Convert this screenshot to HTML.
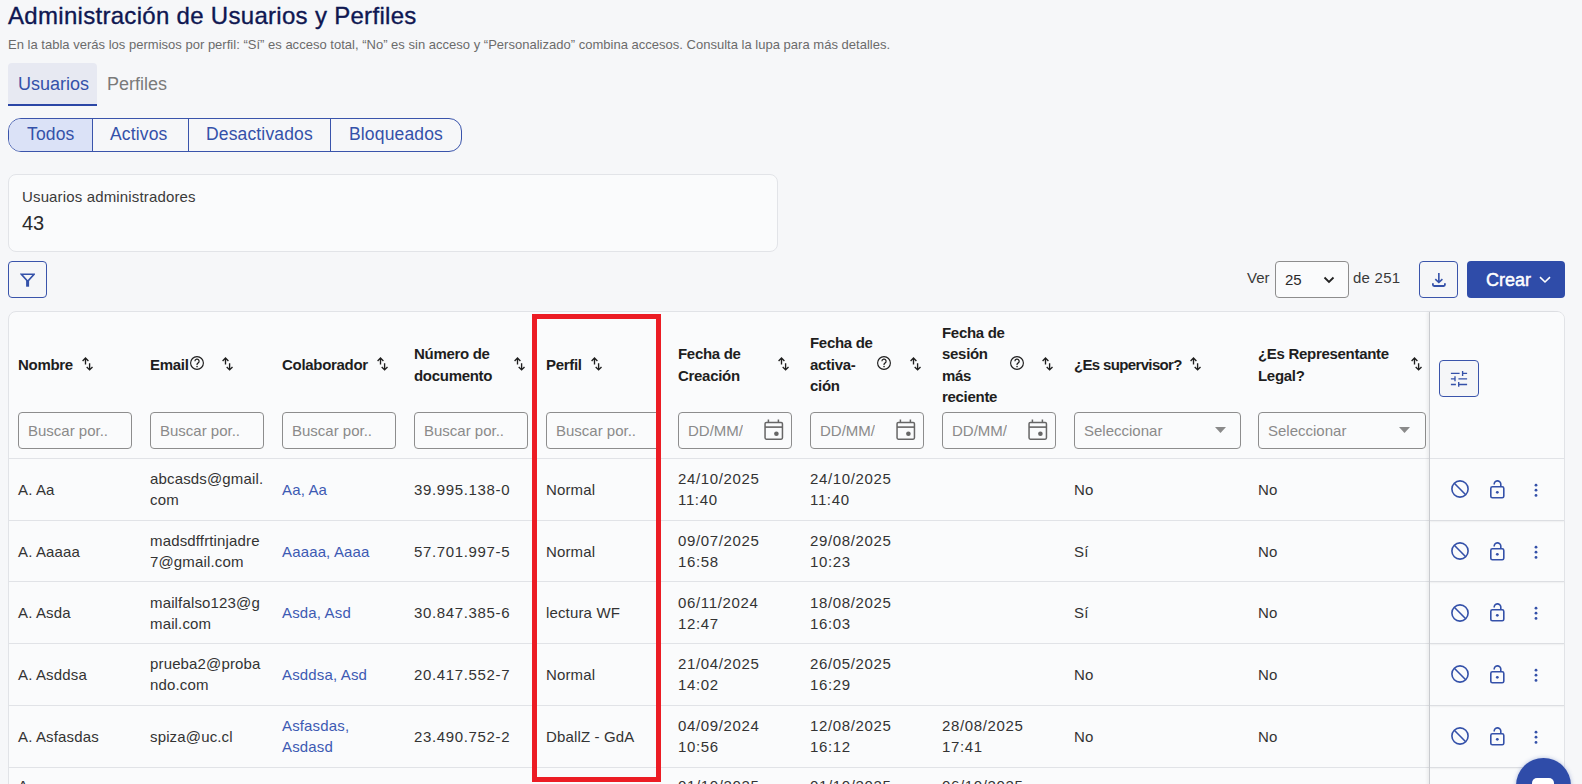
<!DOCTYPE html><html><head><meta charset="utf-8"><style>
*{box-sizing:border-box;margin:0;padding:0}
html,body{width:1582px;height:784px;overflow:hidden;background:#f6f7f9;font-family:"Liberation Sans",sans-serif;color:#333}
.a{position:absolute;white-space:nowrap}
.hl{position:absolute;font-weight:700;font-size:15px;line-height:21.5px;color:#1e1e1e;letter-spacing:-0.3px;white-space:nowrap}
.cell{position:absolute;font-size:15px;line-height:21px;color:#333;white-space:nowrap;letter-spacing:0.15px}
.dg{letter-spacing:0.65px}
.inp{position:absolute;top:412px;height:37px;border:1px solid #8d8d8d;border-radius:4px;background:#fafbfc;font-size:15px;color:#8a8a8a;line-height:35px;padding-left:9px;overflow:hidden;white-space:nowrap}
.link{color:#3d5ab3}
</style></head><body>
<div class="a" style="left:8px;top:1px;font-size:24px;line-height:30px;color:#0f1752;letter-spacing:0.3px;-webkit-text-stroke:0.35px #0f1752">Administración de Usuarios y Perfiles</div>
<div class="a" style="left:8px;top:37px;font-size:13px;line-height:16px;color:#6b6b6b;letter-spacing:0.013px">En la tabla verás los permisos por perfil: “Sí” es acceso total, “No” es sin acceso y “Personalizado” combina accesos. Consulta la lupa para más detalles.</div>
<div class="a" style="left:8px;top:63px;width:89px;height:43px;background:#e7e9f2;border-radius:4px 4px 0 0;border-bottom:2px solid #2b46a6"></div>
<div class="a" style="left:18px;top:73px;font-size:18px;line-height:22px;color:#3451a9">Usuarios</div>
<div class="a" style="left:107px;top:73px;font-size:18px;line-height:22px;color:#7a7a7a">Perfiles</div>
<div class="a" style="left:8px;top:118px;width:454px;height:34px;border:1px solid #3a54ab;border-radius:13px;overflow:hidden;background:transparent"><div style="position:absolute;left:0;top:0;width:84px;height:32px;background:#dbe2f7;border-right:1px solid #3a54ab"></div><div style="position:absolute;left:179px;top:0;width:1px;height:32px;background:#3a54ab"></div><div style="position:absolute;left:321px;top:0;width:1px;height:32px;background:#3a54ab"></div></div>
<div class="a" style="left:27px;top:124px;font-size:17.5px;line-height:21px;color:#3451a9;letter-spacing:0.15px">Todos</div>
<div class="a" style="left:110px;top:124px;font-size:17.5px;line-height:21px;color:#3451a9;letter-spacing:0.15px">Activos</div>
<div class="a" style="left:206px;top:124px;font-size:17.5px;line-height:21px;color:#3451a9;letter-spacing:0.15px">Desactivados</div>
<div class="a" style="left:349px;top:124px;font-size:17.5px;line-height:21px;color:#3451a9;letter-spacing:0.15px">Bloqueados</div>
<div class="a" style="left:8px;top:174px;width:770px;height:78px;border:1px solid #e2e4e8;border-radius:8px;background:#fafbfc"></div>
<div class="a" style="left:22px;top:187px;font-size:15px;line-height:19px;color:#3a3a3a;letter-spacing:0.15px">Usuarios administradores</div>
<div class="a" style="left:22px;top:211px;font-size:20px;line-height:24px;color:#2a2a2a">43</div>
<div class="a" style="left:8px;top:261px;width:39px;height:37px;border:1px solid #3a54ab;border-radius:4px;background:#f5f6f8"></div>
<svg class="a" style="left:20px;top:273px" width="15" height="15" viewBox="0 0 15 15"><path d="M1.4 1.3H14L7.7 8.2Z" fill="none" stroke="#3451a9" stroke-width="1.6" stroke-linejoin="miter"/><rect x="6.1" y="7.2" width="3" height="6.5" fill="#3451a9"/></svg>
<div class="a" style="left:1247px;top:267.5px;font-size:15px;line-height:19px;color:#3a3a3a">Ver</div>
<div class="a" style="left:1275px;top:261px;width:74px;height:37px;border:1px solid #8d8d8d;border-radius:4px;background:#fafbfc"></div>
<div class="a" style="left:1285px;top:269.5px;font-size:15px;line-height:19px;color:#2a2a2a" class="dg">25</div>
<svg class="a" style="left:1323px;top:276px" width="12" height="8" viewBox="0 0 12 8"><path d="M1.5 1.5L6 6L10.5 1.5" fill="none" stroke="#222" stroke-width="1.8"/></svg>
<div class="a" style="left:1353px;top:267.5px;font-size:15px;line-height:19px;color:#3a3a3a;letter-spacing:0.25px">de 251</div>
<div class="a" style="left:1419px;top:261px;width:39px;height:37px;border:1px solid #3a54ab;border-radius:4px;background:#f5f6f8"></div>
<svg class="a" style="left:1431px;top:272px" width="15" height="15" viewBox="0 0 15 15"><path d="M7.85 1V10.2M4.3 7.1L7.85 10.5L11.4 7.1" fill="none" stroke="#3451a9" stroke-width="1.6"/><path d="M1.9 11.2V12.8Q1.9 14 3.1 14H12.7Q13.9 14 13.9 12.8V11.2" fill="none" stroke="#3451a9" stroke-width="1.8"/></svg>
<div class="a" style="left:1467px;top:261px;width:98px;height:37px;border-radius:4px;background:#2f4ca9"></div>
<div class="a" style="left:1486px;top:270px;font-size:18px;line-height:21px;color:#fff;font-weight:400;-webkit-text-stroke:0.45px #fff;letter-spacing:0px">Crear</div>
<svg class="a" style="left:1539px;top:276px" width="12" height="8" viewBox="0 0 12 8"><path d="M1 1.2L6 6L11 1.2" fill="none" stroke="#fff" stroke-width="1.6"/></svg>
<div class="a" style="left:8px;top:311px;width:1557px;height:500px;border:1px solid #e1e3e7;border-radius:8px;background:#fafbfc"></div>
<div class="hl" style="left:18px;top:353.75px">Nombre</div>
<div class="hl" style="left:150px;top:353.75px">Email</div>
<div class="hl" style="left:282px;top:353.75px">Colaborador</div>
<div class="hl" style="left:414px;top:343.0px">Número de<br>documento</div>
<div class="hl" style="left:546px;top:353.75px">Perfil</div>
<div class="hl" style="left:678px;top:343.0px">Fecha de<br>Creación</div>
<div class="hl" style="left:810px;top:332.25px">Fecha de<br>activa-<br>ción</div>
<div class="hl" style="left:942px;top:321.5px">Fecha de<br>sesión<br>más<br>reciente</div>
<div class="hl" style="left:1074px;top:353.75px"><span style='letter-spacing:-0.65px'>¿Es supervisor?</span></div>
<div class="hl" style="left:1258px;top:343.0px">¿Es Representante<br>Legal?</div>
<div class="a" style="left:82px;top:357px;line-height:0"><svg width="12" height="14" viewBox="0 0 12 14"><path d="M3.5 1V7.6M0.6 3.9L3.5 1L6.4 3.9M7.6 6.3V12.9M4.7 10L7.6 12.9L10.5 10" fill="none" stroke="#1e1e1e" stroke-width="1.35"/></svg></div>
<div class="a" style="left:222px;top:357px;line-height:0"><svg width="12" height="14" viewBox="0 0 12 14"><path d="M3.5 1V7.6M0.6 3.9L3.5 1L6.4 3.9M7.6 6.3V12.9M4.7 10L7.6 12.9L10.5 10" fill="none" stroke="#1e1e1e" stroke-width="1.35"/></svg></div>
<div class="a" style="left:377px;top:357px;line-height:0"><svg width="12" height="14" viewBox="0 0 12 14"><path d="M3.5 1V7.6M0.6 3.9L3.5 1L6.4 3.9M7.6 6.3V12.9M4.7 10L7.6 12.9L10.5 10" fill="none" stroke="#1e1e1e" stroke-width="1.35"/></svg></div>
<div class="a" style="left:514px;top:357px;line-height:0"><svg width="12" height="14" viewBox="0 0 12 14"><path d="M3.5 1V7.6M0.6 3.9L3.5 1L6.4 3.9M7.6 6.3V12.9M4.7 10L7.6 12.9L10.5 10" fill="none" stroke="#1e1e1e" stroke-width="1.35"/></svg></div>
<div class="a" style="left:591px;top:357px;line-height:0"><svg width="12" height="14" viewBox="0 0 12 14"><path d="M3.5 1V7.6M0.6 3.9L3.5 1L6.4 3.9M7.6 6.3V12.9M4.7 10L7.6 12.9L10.5 10" fill="none" stroke="#1e1e1e" stroke-width="1.35"/></svg></div>
<div class="a" style="left:778px;top:357px;line-height:0"><svg width="12" height="14" viewBox="0 0 12 14"><path d="M3.5 1V7.6M0.6 3.9L3.5 1L6.4 3.9M7.6 6.3V12.9M4.7 10L7.6 12.9L10.5 10" fill="none" stroke="#1e1e1e" stroke-width="1.35"/></svg></div>
<div class="a" style="left:910px;top:357px;line-height:0"><svg width="12" height="14" viewBox="0 0 12 14"><path d="M3.5 1V7.6M0.6 3.9L3.5 1L6.4 3.9M7.6 6.3V12.9M4.7 10L7.6 12.9L10.5 10" fill="none" stroke="#1e1e1e" stroke-width="1.35"/></svg></div>
<div class="a" style="left:1042px;top:357px;line-height:0"><svg width="12" height="14" viewBox="0 0 12 14"><path d="M3.5 1V7.6M0.6 3.9L3.5 1L6.4 3.9M7.6 6.3V12.9M4.7 10L7.6 12.9L10.5 10" fill="none" stroke="#1e1e1e" stroke-width="1.35"/></svg></div>
<div class="a" style="left:1190px;top:357px;line-height:0"><svg width="12" height="14" viewBox="0 0 12 14"><path d="M3.5 1V7.6M0.6 3.9L3.5 1L6.4 3.9M7.6 6.3V12.9M4.7 10L7.6 12.9L10.5 10" fill="none" stroke="#1e1e1e" stroke-width="1.35"/></svg></div>
<div class="a" style="left:1411px;top:357px;line-height:0"><svg width="12" height="14" viewBox="0 0 12 14"><path d="M3.5 1V7.6M0.6 3.9L3.5 1L6.4 3.9M7.6 6.3V12.9M4.7 10L7.6 12.9L10.5 10" fill="none" stroke="#1e1e1e" stroke-width="1.35"/></svg></div>
<div class="a" style="left:190px;top:356px;line-height:0"><svg width="15" height="15" viewBox="0 0 15 15"><circle cx="7" cy="7" r="6.4" fill="none" stroke="#1e1e1e" stroke-width="1.15"/><path d="M4.9 5.3a2.1 2.1 0 1 1 3.1 1.8c-0.6 0.35 -0.95 0.75 -0.95 1.5v0.5" fill="none" stroke="#1e1e1e" stroke-width="1.2"/><circle cx="7.05" cy="10.6" r="0.8" fill="#1e1e1e"/></svg></div>
<div class="a" style="left:877px;top:356px;line-height:0"><svg width="15" height="15" viewBox="0 0 15 15"><circle cx="7" cy="7" r="6.4" fill="none" stroke="#1e1e1e" stroke-width="1.15"/><path d="M4.9 5.3a2.1 2.1 0 1 1 3.1 1.8c-0.6 0.35 -0.95 0.75 -0.95 1.5v0.5" fill="none" stroke="#1e1e1e" stroke-width="1.2"/><circle cx="7.05" cy="10.6" r="0.8" fill="#1e1e1e"/></svg></div>
<div class="a" style="left:1009.5px;top:356px;line-height:0"><svg width="15" height="15" viewBox="0 0 15 15"><circle cx="7" cy="7" r="6.4" fill="none" stroke="#1e1e1e" stroke-width="1.15"/><path d="M4.9 5.3a2.1 2.1 0 1 1 3.1 1.8c-0.6 0.35 -0.95 0.75 -0.95 1.5v0.5" fill="none" stroke="#1e1e1e" stroke-width="1.2"/><circle cx="7.05" cy="10.6" r="0.8" fill="#1e1e1e"/></svg></div>
<div class="inp" style="left:18px;width:114px">Buscar por..</div>
<div class="inp" style="left:150px;width:114px">Buscar por..</div>
<div class="inp" style="left:282px;width:114px">Buscar por..</div>
<div class="inp" style="left:414px;width:114px">Buscar por..</div>
<div class="inp" style="left:546px;width:114px">Buscar por..</div>
<div class="inp" style="left:678px;width:114px"><span style="display:inline-block;width:54.5px;overflow:hidden;vertical-align:top">DD/MM/AAAA</span></div>
<div class="a" style="left:764px;top:419px;line-height:0"><svg width="20" height="21" viewBox="0 0 20 21"><rect x="1.05" y="3.55" width="17.4" height="16.6" rx="1.3" fill="none" stroke="#666" stroke-width="1.5"/><path d="M1.05 8.1H18.45" stroke="#666" stroke-width="1.6"/><path d="M4.4 0.4V3.8M14.4 0.4V3.8" stroke="#666" stroke-width="1.5"/><circle cx="12.4" cy="14.8" r="2.3" fill="#666"/></svg></div>
<div class="inp" style="left:810px;width:114px"><span style="display:inline-block;width:54.5px;overflow:hidden;vertical-align:top">DD/MM/AAAA</span></div>
<div class="a" style="left:896px;top:419px;line-height:0"><svg width="20" height="21" viewBox="0 0 20 21"><rect x="1.05" y="3.55" width="17.4" height="16.6" rx="1.3" fill="none" stroke="#666" stroke-width="1.5"/><path d="M1.05 8.1H18.45" stroke="#666" stroke-width="1.6"/><path d="M4.4 0.4V3.8M14.4 0.4V3.8" stroke="#666" stroke-width="1.5"/><circle cx="12.4" cy="14.8" r="2.3" fill="#666"/></svg></div>
<div class="inp" style="left:942px;width:114px"><span style="display:inline-block;width:54.5px;overflow:hidden;vertical-align:top">DD/MM/AAAA</span></div>
<div class="a" style="left:1028px;top:419px;line-height:0"><svg width="20" height="21" viewBox="0 0 20 21"><rect x="1.05" y="3.55" width="17.4" height="16.6" rx="1.3" fill="none" stroke="#666" stroke-width="1.5"/><path d="M1.05 8.1H18.45" stroke="#666" stroke-width="1.6"/><path d="M4.4 0.4V3.8M14.4 0.4V3.8" stroke="#666" stroke-width="1.5"/><circle cx="12.4" cy="14.8" r="2.3" fill="#666"/></svg></div>
<div class="inp" style="left:1074px;width:167px">Seleccionar</div>
<svg class="a" style="left:1215px;top:427px" width="11" height="6" viewBox="0 0 11 6"><path d="M0 0H11L5.5 6Z" fill="#8a8a8a"/></svg>
<div class="inp" style="left:1258px;width:168px">Seleccionar</div>
<svg class="a" style="left:1399px;top:427px" width="11" height="6" viewBox="0 0 11 6"><path d="M0 0H11L5.5 6Z" fill="#8a8a8a"/></svg>
<div class="a" style="left:9px;top:458px;width:1555px;height:1px;background:#e1e3e7"></div>
<div class="cell" style="left:18px;top:478.85px">A. Aa</div>
<div class="cell" style="left:150px;top:468.35px">abcasds@gmail.<br>com</div>
<div class="cell link" style="left:282px;top:478.85px">Aa, Aa</div>
<div class="cell dg" style="left:414px;top:478.85px">39.995.138-0</div>
<div class="cell" style="left:546px;top:478.85px">Normal</div>
<div class="cell dg" style="left:678px;top:468.35px">24/10/2025<br>11:40</div>
<div class="cell dg" style="left:810px;top:468.35px">24/10/2025<br>11:40</div>
<div class="cell" style="left:1074px;top:478.85px">No</div>
<div class="cell" style="left:1258px;top:478.85px">No</div>
<div class="a" style="left:9px;top:519.70px;width:1555px;height:1px;background:#e1e3e7"></div>
<div class="cell" style="left:18px;top:540.55px">A. Aaaaa</div>
<div class="cell" style="left:150px;top:530.05px">madsdffrtinjadre<br>7@gmail.com</div>
<div class="cell link" style="left:282px;top:540.55px">Aaaaa, Aaaa</div>
<div class="cell dg" style="left:414px;top:540.55px">57.701.997-5</div>
<div class="cell" style="left:546px;top:540.55px">Normal</div>
<div class="cell dg" style="left:678px;top:530.05px">09/07/2025<br>16:58</div>
<div class="cell dg" style="left:810px;top:530.05px">29/08/2025<br>10:23</div>
<div class="cell" style="left:1074px;top:540.55px">Sí</div>
<div class="cell" style="left:1258px;top:540.55px">No</div>
<div class="a" style="left:9px;top:581.40px;width:1555px;height:1px;background:#e1e3e7"></div>
<div class="cell" style="left:18px;top:602.25px">A. Asda</div>
<div class="cell" style="left:150px;top:591.75px">mailfalso123@g<br>mail.com</div>
<div class="cell link" style="left:282px;top:602.25px">Asda, Asd</div>
<div class="cell dg" style="left:414px;top:602.25px">30.847.385-6</div>
<div class="cell" style="left:546px;top:602.25px">lectura WF</div>
<div class="cell dg" style="left:678px;top:591.75px">06/11/2024<br>12:47</div>
<div class="cell dg" style="left:810px;top:591.75px">18/08/2025<br>16:03</div>
<div class="cell" style="left:1074px;top:602.25px">Sí</div>
<div class="cell" style="left:1258px;top:602.25px">No</div>
<div class="a" style="left:9px;top:643.10px;width:1555px;height:1px;background:#e1e3e7"></div>
<div class="cell" style="left:18px;top:663.95px">A. Asddsa</div>
<div class="cell" style="left:150px;top:653.45px">prueba2@proba<br>ndo.com</div>
<div class="cell link" style="left:282px;top:663.95px">Asddsa, Asd</div>
<div class="cell dg" style="left:414px;top:663.95px">20.417.552-7</div>
<div class="cell" style="left:546px;top:663.95px">Normal</div>
<div class="cell dg" style="left:678px;top:653.45px">21/04/2025<br>14:02</div>
<div class="cell dg" style="left:810px;top:653.45px">26/05/2025<br>16:29</div>
<div class="cell" style="left:1074px;top:663.95px">No</div>
<div class="cell" style="left:1258px;top:663.95px">No</div>
<div class="a" style="left:9px;top:704.80px;width:1555px;height:1px;background:#e1e3e7"></div>
<div class="cell" style="left:18px;top:725.65px">A. Asfasdas</div>
<div class="cell" style="left:150px;top:725.65px">spiza@uc.cl</div>
<div class="cell link" style="left:282px;top:715.15px">Asfasdas,<br>Asdasd</div>
<div class="cell dg" style="left:414px;top:725.65px">23.490.752-2</div>
<div class="cell" style="left:546px;top:725.65px">DballZ - GdA</div>
<div class="cell dg" style="left:678px;top:715.15px">04/09/2024<br>10:56</div>
<div class="cell dg" style="left:810px;top:715.15px">12/08/2025<br>16:12</div>
<div class="cell dg" style="left:942px;top:715.15px">28/08/2025<br>17:41</div>
<div class="cell" style="left:1074px;top:725.65px">No</div>
<div class="cell" style="left:1258px;top:725.65px">No</div>
<div class="a" style="left:9px;top:766.50px;width:1555px;height:1px;background:#e1e3e7"></div>
<div class="cell" style="left:18px;top:775.25px">A.<br>Aaaaa</div>
<div class="cell" style="left:150px;top:785.75px">aaaa@aa.cl</div>
<div class="cell link" style="left:282px;top:785.75px">Aaaa, Aaaa</div>
<div class="cell dg" style="left:414px;top:785.75px">11.111.111-1</div>
<div class="cell" style="left:546px;top:785.75px">Normal</div>
<div class="cell dg" style="left:678px;top:775.25px">01/10/2025<br>12:00</div>
<div class="cell dg" style="left:810px;top:775.25px">01/10/2025<br>12:00</div>
<div class="cell dg" style="left:942px;top:775.25px">06/10/2025<br>12:00</div>
<div class="cell" style="left:1074px;top:785.75px">No</div>
<div class="cell" style="left:1258px;top:785.75px">No</div>
<div class="a" style="left:9px;top:828.20px;width:1555px;height:1px;background:#e1e3e7"></div>
<div class="a" style="left:1429px;top:312px;width:135px;height:480px;background:#fafbfc;border-left:1px solid #c9cbcf;border-top-right-radius:7px;box-shadow:-2px 0 3px rgba(0,0,0,0.06)"></div>
<div class="a" style="left:1430px;top:458px;width:134px;height:1px;background:#e1e3e7"></div>
<div class="a" style="left:1439px;top:360px;width:40px;height:37px;border:1px solid #3a54ab;border-radius:4px;background:#f5f6f8"></div>
<svg class="a" style="left:1450px;top:370px" width="18" height="17" viewBox="0 0 18 17"><path d="M0.9 3.4H9.6M12.1 3.4H17.1M12.6 0.9V5.9M0.9 8.9H4.5M5 6.2V11.2M8.4 8.9H17.1M0.9 14.5H5.9M8.7 14.5H17.1M8.7 12.1V16.8" fill="none" stroke="#3451a9" stroke-width="1.35"/></svg>
<div class="a" style="left:1450px;top:479.35px;line-height:0"><svg width="20" height="20" viewBox="0 0 20 20"><circle cx="10" cy="10" r="8.1" fill="none" stroke="#3451a9" stroke-width="1.6"/><path d="M4.3 4.3L15.7 15.7" stroke="#3451a9" stroke-width="1.6"/></svg></div>
<div class="a" style="left:1489px;top:478.85px;line-height:0"><svg width="18" height="20" viewBox="0 0 18 20"><rect x="1.8" y="7.8" width="13" height="11" rx="1.6" fill="none" stroke="#3451a9" stroke-width="1.6"/><path d="M5.2 5.5A3.3 3.3 0 0 1 11.8 4.8V7.8" fill="none" stroke="#3451a9" stroke-width="1.6"/><circle cx="8.3" cy="13.3" r="1.4" fill="#3451a9"/></svg></div>
<div class="a" style="left:1533px;top:482.85px;line-height:0"><svg width="6" height="14" viewBox="0 0 6 14"><circle cx="3" cy="2.2" r="1.4" fill="#3451a9"/><circle cx="3" cy="7.2" r="1.4" fill="#3451a9"/><circle cx="3" cy="12.4" r="1.4" fill="#3451a9"/></svg></div>
<div class="a" style="left:1430px;top:519.70px;width:134px;height:1px;background:#dcdee2;box-shadow:0 1px 1.5px rgba(0,0,0,0.06)"></div>
<div class="a" style="left:1450px;top:541.05px;line-height:0"><svg width="20" height="20" viewBox="0 0 20 20"><circle cx="10" cy="10" r="8.1" fill="none" stroke="#3451a9" stroke-width="1.6"/><path d="M4.3 4.3L15.7 15.7" stroke="#3451a9" stroke-width="1.6"/></svg></div>
<div class="a" style="left:1489px;top:540.55px;line-height:0"><svg width="18" height="20" viewBox="0 0 18 20"><rect x="1.8" y="7.8" width="13" height="11" rx="1.6" fill="none" stroke="#3451a9" stroke-width="1.6"/><path d="M5.2 5.5A3.3 3.3 0 0 1 11.8 4.8V7.8" fill="none" stroke="#3451a9" stroke-width="1.6"/><circle cx="8.3" cy="13.3" r="1.4" fill="#3451a9"/></svg></div>
<div class="a" style="left:1533px;top:544.55px;line-height:0"><svg width="6" height="14" viewBox="0 0 6 14"><circle cx="3" cy="2.2" r="1.4" fill="#3451a9"/><circle cx="3" cy="7.2" r="1.4" fill="#3451a9"/><circle cx="3" cy="12.4" r="1.4" fill="#3451a9"/></svg></div>
<div class="a" style="left:1430px;top:581.40px;width:134px;height:1px;background:#dcdee2;box-shadow:0 1px 1.5px rgba(0,0,0,0.06)"></div>
<div class="a" style="left:1450px;top:602.75px;line-height:0"><svg width="20" height="20" viewBox="0 0 20 20"><circle cx="10" cy="10" r="8.1" fill="none" stroke="#3451a9" stroke-width="1.6"/><path d="M4.3 4.3L15.7 15.7" stroke="#3451a9" stroke-width="1.6"/></svg></div>
<div class="a" style="left:1489px;top:602.25px;line-height:0"><svg width="18" height="20" viewBox="0 0 18 20"><rect x="1.8" y="7.8" width="13" height="11" rx="1.6" fill="none" stroke="#3451a9" stroke-width="1.6"/><path d="M5.2 5.5A3.3 3.3 0 0 1 11.8 4.8V7.8" fill="none" stroke="#3451a9" stroke-width="1.6"/><circle cx="8.3" cy="13.3" r="1.4" fill="#3451a9"/></svg></div>
<div class="a" style="left:1533px;top:606.25px;line-height:0"><svg width="6" height="14" viewBox="0 0 6 14"><circle cx="3" cy="2.2" r="1.4" fill="#3451a9"/><circle cx="3" cy="7.2" r="1.4" fill="#3451a9"/><circle cx="3" cy="12.4" r="1.4" fill="#3451a9"/></svg></div>
<div class="a" style="left:1430px;top:643.10px;width:134px;height:1px;background:#dcdee2;box-shadow:0 1px 1.5px rgba(0,0,0,0.06)"></div>
<div class="a" style="left:1450px;top:664.45px;line-height:0"><svg width="20" height="20" viewBox="0 0 20 20"><circle cx="10" cy="10" r="8.1" fill="none" stroke="#3451a9" stroke-width="1.6"/><path d="M4.3 4.3L15.7 15.7" stroke="#3451a9" stroke-width="1.6"/></svg></div>
<div class="a" style="left:1489px;top:663.95px;line-height:0"><svg width="18" height="20" viewBox="0 0 18 20"><rect x="1.8" y="7.8" width="13" height="11" rx="1.6" fill="none" stroke="#3451a9" stroke-width="1.6"/><path d="M5.2 5.5A3.3 3.3 0 0 1 11.8 4.8V7.8" fill="none" stroke="#3451a9" stroke-width="1.6"/><circle cx="8.3" cy="13.3" r="1.4" fill="#3451a9"/></svg></div>
<div class="a" style="left:1533px;top:667.95px;line-height:0"><svg width="6" height="14" viewBox="0 0 6 14"><circle cx="3" cy="2.2" r="1.4" fill="#3451a9"/><circle cx="3" cy="7.2" r="1.4" fill="#3451a9"/><circle cx="3" cy="12.4" r="1.4" fill="#3451a9"/></svg></div>
<div class="a" style="left:1430px;top:704.80px;width:134px;height:1px;background:#dcdee2;box-shadow:0 1px 1.5px rgba(0,0,0,0.06)"></div>
<div class="a" style="left:1450px;top:726.15px;line-height:0"><svg width="20" height="20" viewBox="0 0 20 20"><circle cx="10" cy="10" r="8.1" fill="none" stroke="#3451a9" stroke-width="1.6"/><path d="M4.3 4.3L15.7 15.7" stroke="#3451a9" stroke-width="1.6"/></svg></div>
<div class="a" style="left:1489px;top:725.65px;line-height:0"><svg width="18" height="20" viewBox="0 0 18 20"><rect x="1.8" y="7.8" width="13" height="11" rx="1.6" fill="none" stroke="#3451a9" stroke-width="1.6"/><path d="M5.2 5.5A3.3 3.3 0 0 1 11.8 4.8V7.8" fill="none" stroke="#3451a9" stroke-width="1.6"/><circle cx="8.3" cy="13.3" r="1.4" fill="#3451a9"/></svg></div>
<div class="a" style="left:1533px;top:729.65px;line-height:0"><svg width="6" height="14" viewBox="0 0 6 14"><circle cx="3" cy="2.2" r="1.4" fill="#3451a9"/><circle cx="3" cy="7.2" r="1.4" fill="#3451a9"/><circle cx="3" cy="12.4" r="1.4" fill="#3451a9"/></svg></div>
<div class="a" style="left:1430px;top:766.50px;width:134px;height:1px;background:#dcdee2;box-shadow:0 1px 1.5px rgba(0,0,0,0.06)"></div>
<div class="a" style="left:1450px;top:787.85px;line-height:0"><svg width="20" height="20" viewBox="0 0 20 20"><circle cx="10" cy="10" r="8.1" fill="none" stroke="#3451a9" stroke-width="1.6"/><path d="M4.3 4.3L15.7 15.7" stroke="#3451a9" stroke-width="1.6"/></svg></div>
<div class="a" style="left:1489px;top:787.35px;line-height:0"><svg width="18" height="20" viewBox="0 0 18 20"><rect x="1.8" y="7.8" width="13" height="11" rx="1.6" fill="none" stroke="#3451a9" stroke-width="1.6"/><path d="M5.2 5.5A3.3 3.3 0 0 1 11.8 4.8V7.8" fill="none" stroke="#3451a9" stroke-width="1.6"/><circle cx="8.3" cy="13.3" r="1.4" fill="#3451a9"/></svg></div>
<div class="a" style="left:1533px;top:791.35px;line-height:0"><svg width="6" height="14" viewBox="0 0 6 14"><circle cx="3" cy="2.2" r="1.4" fill="#3451a9"/><circle cx="3" cy="7.2" r="1.4" fill="#3451a9"/><circle cx="3" cy="12.4" r="1.4" fill="#3451a9"/></svg></div>
<div class="a" style="left:1430px;top:828.20px;width:134px;height:1px;background:#dcdee2;box-shadow:0 1px 1.5px rgba(0,0,0,0.06)"></div>
<div class="a" style="left:532px;top:314px;width:129px;height:468px;border:5px solid #ec1c24"></div>
<div class="a" style="left:1516px;top:758px;width:55px;height:55px;border-radius:50%;background:#2f4ca9;box-shadow:0 0 4px rgba(47,76,169,0.35)"></div>
<div class="a" style="left:1532px;top:778px;width:22px;height:16px;border-radius:5px;background:#fff"></div>
</body></html>
